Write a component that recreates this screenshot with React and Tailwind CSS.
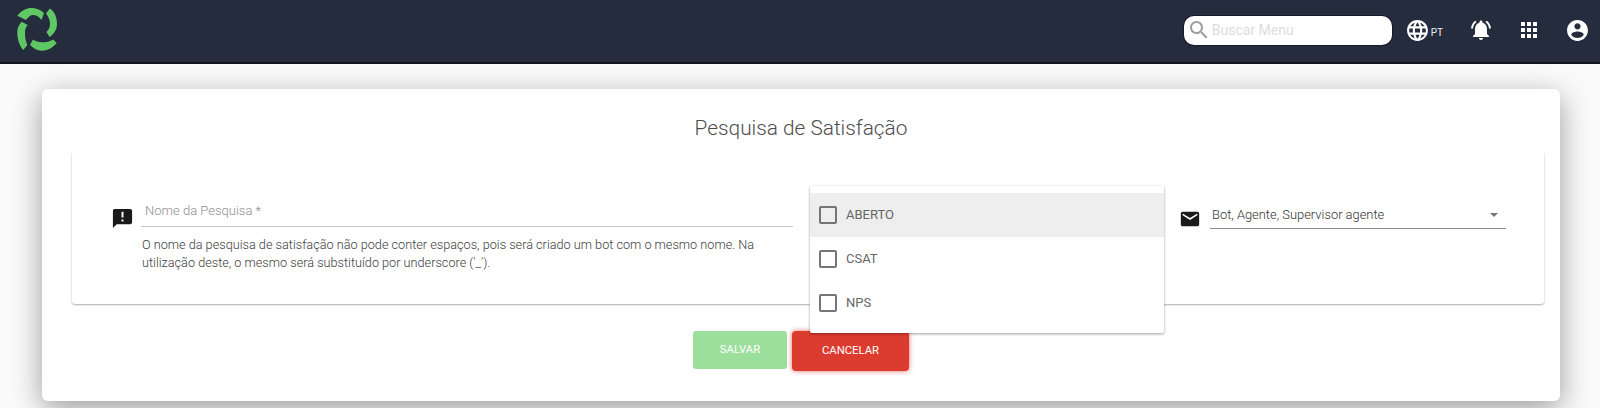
const IconPath = ({ d, className }) => (
  <svg viewBox="0 0 24 24" fill="currentColor" className={className}>
    <path d={d} />
  </svg>
);

const icons = {
  announcement: "M20 2H4c-1.1 0-1.99.9-1.99 2L2 22l4-4h14c1.1 0 2-.9 2-2V4c0-1.1-.9-2-2-2zm-7 9h-2V5h2v6zm0 4h-2v-2h2v2z",
  email: "M20 4H4c-1.1 0-1.99.9-1.99 2L2 18c0 1.1.9 2 2 2h16c1.1 0 2-.9 2-2V6c0-1.1-.9-2-2-2zm0 4l-8 5-8-5V6l8 5 8-5v2z",
  bell: "M7.58 4.08L6.15 2.65C3.75 4.48 2.17 7.3 2.03 10.5h2c.15-2.65 1.51-4.97 3.55-6.42zm12.39 6.42h2c-.15-3.2-1.73-6.02-4.12-7.85l-1.42 1.43c2.02 1.45 3.39 3.77 3.54 6.42zM18 11c0-3.07-1.64-5.64-4.5-6.32V4c0-.83-.67-1.5-1.5-1.5s-1.5.67-1.5 1.5v.68C7.63 5.36 6 7.92 6 11v5l-2 2v1h16v-1l-2-2v-5zm-6 11c.14 0 .27-.01.4-.04.65-.14 1.18-.58 1.44-1.18.1-.24.15-.5.15-.78h-4c.01 1.1.9 2 2.01 2z",
  apps: "M4 8h4V4H4v4zm6 12h4v-4h-4v4zm-6 0h4v-4H4v4zm0-6h4v-4H4v4zm6 0h4v-4h-4v4zm6-10v4h4V4h-4zm-6 4h4V4h-4v4zm6 6h4v-4h-4v4zm0 6h4v-4h-4v4z",
  account: "M12 2C6.48 2 2 6.48 2 12s4.48 10 10 10 10-4.48 10-10S17.52 2 12 2zm0 3c1.66 0 3 1.34 3 3s-1.34 3-3 3-3-1.34-3-3 1.34-3 3-3zm0 14.2c-2.5 0-4.71-1.28-6-3.22.03-1.99 4-3.08 6-3.08 1.99 0 5.97 1.09 6 3.08-1.29 1.94-3.5 3.22-6 3.22z",
  language: "M11.99 2C6.47 2 2 6.48 2 12s4.47 10 9.99 10C17.52 22 22 17.52 22 12S17.52 2 11.99 2zm6.93 6h-2.95c-.32-1.25-.78-2.45-1.38-3.56 1.84.63 3.37 1.91 4.33 3.56zM12 4.04c.83 1.2 1.48 2.53 1.91 3.96h-3.82c.43-1.43 1.08-2.76 1.91-3.96zM4.26 14C4.1 13.36 4 12.69 4 12s.1-1.36.26-2h3.38c-.08.66-.14 1.32-.14 2 0 .68.06 1.34.14 2H4.26zm.82 2h2.95c.32 1.25.78 2.45 1.38 3.56-1.84-.63-3.37-1.9-4.33-3.56zm2.95-8H5.08c.96-1.66 2.49-2.93 4.33-3.56C8.81 5.55 8.35 6.75 8.03 8zM12 19.96c-.83-1.2-1.48-2.53-1.91-3.96h3.82c-.43 1.43-1.08 2.76-1.91 3.96zM14.34 14H9.66c-.09-.66-.16-1.32-.16-2 0-.68.07-1.35.16-2h4.68c.09.65.16 1.32.16 2 0 .68-.07 1.34-.16 2zm.25 5.56c.6-1.11 1.06-2.31 1.38-3.56h2.95c-.96 1.65-2.49 2.93-4.33 3.56zM16.36 14c.08-.66.14-1.32.14-2 0-.68-.06-1.34-.14-2h3.38c.16.64.26 1.31.26 2s-.1 1.36-.26 2h-3.38z",
  search: "M15.5 14h-.79l-.28-.27C15.41 12.59 16 11.11 16 9.5 16 5.91 13.09 3 9.5 3S3 5.91 3 9.5 5.91 16 9.5 16c1.61 0 3.09-.59 4.23-1.57l.27.28v.79l5 4.99L20.49 19l-4.99-5zm-6 0C7.01 14 5 11.99 5 9.5S7.01 5 9.5 5 14 7.01 14 9.5 11.99 14 9.5 14z",
};

// logo desenhado em coordenadas da propria tela, quatro arcos
const Logo = () => (
  <svg viewBox="0 0 40 44" className="w-[40px] h-[44px] text-[#5fc864]" fill="currentColor">
    <path d="M0.3 7.7C5 2 10 0 14 0C19 0 23.5 1.7 27 5L24.5 12C22 8.5 19.5 7 16 7C13.5 7 11 9 9 12Z" />
    <path d="M33 0.5C37.5 3.5 40 9 40 16C40 21 37.5 25.5 32.5 29L29.5 24C32 21.5 33 19 33 16C33 12 31.5 8.5 29 5.5Z" />
    <path d="M39.7 35C35.5 40 30.5 42.7 24.7 42.7C20.5 42.7 16.5 40.5 13 37L16 31.5C18.5 33.3 21.5 34.3 24.7 34.3C29 34.3 33 33.5 36.3 31.5Z" />
    <path d="M6.3 42C2.2 37.5 0.3 31 0.3 24C0.3 20 2 16.5 4.7 13.7L10.7 17C9 19 8 21 8 24C8 29 8.5 33 10.3 37Z" />
  </svg>
);

const options = ["ABERTO", "CSAT", "NPS"];

const App = () => {
  return (
    <div className="h-[408px] overflow-hidden bg-[#fafafa] font-['Roboto',sans-serif]">
      <header className="h-[64px] bg-[#252c3d] border-b-2 border-[#10141f] flex items-center pl-[17px] pb-[2px] text-white">
        <Logo />
        <div className="ml-auto flex items-center">
          <div className="w-[208px] h-[29px] bg-white rounded-[10px] flex items-center pl-[3px] shadow-[0_0_0_1px_#151a26]">
            <IconPath d={icons.search} className="w-[24px] h-[24px] text-[#9e9e9e]" />
            <span className="ml-[1px] text-[14px] text-[#dddddd]">Buscar Menu</span>
          </div>
          <div className="ml-[13px] flex items-center">
            <IconPath d={icons.language} className="w-[25px] h-[25px]" />
            <span className="ml-[1px] mt-[5px] text-[10px] text-[#eeeeee]">PT</span>
          </div>
          <IconPath d={icons.bell} className="ml-[26px] w-[24px] h-[24px]" />
          <IconPath d={icons.apps} className="ml-[24px] w-[24px] h-[24px]" />
          <IconPath d={icons.account} className="ml-[24px] mr-[10px] w-[25px] h-[25px]" />
        </div>
      </header>

      <main className="pt-[25px] px-[40px]">
        <div className="w-[1518px] ml-[2px] h-[312px] bg-white rounded-[6px] shadow-[0_8px_30px_rgba(0,0,0,0.38)] px-[30px]">
          <h2 className="h-[62px] pt-[25px] text-center text-[20.8px] leading-[28px] font-light text-[#4d4d4d]">
            Pesquisa de Satisfação
          </h2>

          <div className="h-[153px] w-[1472px] rounded-[3px] bg-white shadow-[0_1px_2px_rgba(0,0,0,0.32)] flex pl-[39px]">
            <IconPath d={icons.announcement} className="mt-[56px] w-[23px] h-[23px] text-[#1a1a1a]" />
            <div className="ml-[7px] w-[652px] pt-[48px]">
              <div className="h-[28px] border-b border-[#c9c9c9] pl-[4px] text-[13px] leading-[24px] font-light text-[#8f8f8f]">
                Nome da Pesquisa *
              </div>
              <p className="mt-[9px] pl-[1px] text-[12.7px] leading-[18.4px] font-light text-[#3d3d3d]">
                O nome da pesquisa de satisfação não pode conter espaços, pois será criado um bot com o mesmo nome. Na utilização deste, o mesmo será substituído por underscore ('_').
              </p>
            </div>

            <div className="relative w-[386px] shrink-0">
              <ul className="absolute left-[17px] top-[35px] w-[354px] h-[147px] py-[7px] bg-white rounded-[2px] shadow-[0_1px_3px_rgba(0,0,0,0.38)] z-10">
                {options.map((opt, i) => (
                  <li
                    key={opt}
                    className={`h-[44px] flex items-center pl-[9px] text-[13px] text-[#666666] ${i === 0 ? "bg-[#eeeeee]" : ""}`}
                  >
                    <span className="w-[18px] h-[18px] rounded-[2px] border-2 border-[#757575]" />
                    <span className="ml-[9px]">{opt}</span>
                  </li>
                ))}
              </ul>
            </div>

            <IconPath d={icons.email} className="mt-[57px] w-[22px] h-[22px] text-[#1a1a1a]" />
            <div className="ml-[9px] w-[296px] mt-[50px] h-[28px] border-b-[1.5px] border-[#8c8c8c] flex items-center pl-[2px] text-[12.9px] font-light text-[#333333]">
              Bot, Agente, Supervisor agente
              <span className="ml-auto mr-[8px] w-0 h-0 border-x-[4px] border-x-transparent border-t-[4px] border-t-[#757575]" />
            </div>
          </div>

          <div className="mt-[27px] flex justify-center items-start gap-[5px] text-[11.3px]">
            <button className="w-[94px] h-[38px] rounded-[3px] bg-[#9cdf9d] text-white">SALVAR</button>
            <button className="w-[117px] h-[40px] rounded-[4px] bg-[#dc3b30] text-white shadow-[0_0_5px_rgba(220,59,48,0.75)]">CANCELAR</button>
          </div>
        </div>
      </main>
    </div>
  );
};

export default App;
